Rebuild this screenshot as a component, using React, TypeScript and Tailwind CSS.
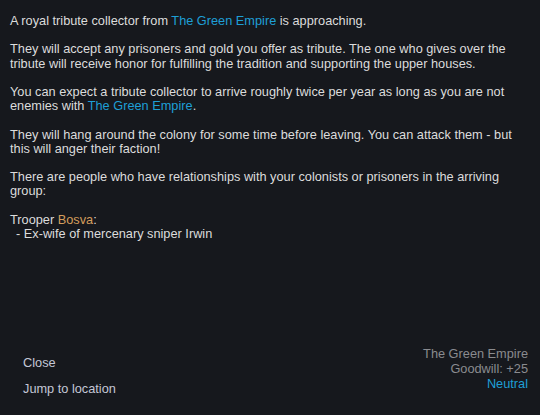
export default function App() {
  return (
    <div
      className="w-[540px] h-[415px] bg-[#16181d] flex flex-col text-[12.75px] leading-[14.2px] text-[#dcdcdc]"
      style={{ fontFamily: '"Liberation Sans", Arial, sans-serif' }}
    >
      {/* Letter body */}
      <div className="pl-[10px] pr-[28px] pt-[14px] flex flex-col gap-[14.2px]">
        <p>
          A royal tribute collector from{" "}
          <span className="text-[#1e9fd6]">The Green Empire</span> is approaching.
        </p>
        <p>
          They will accept any prisoners and gold you offer as tribute. The one who gives over the
          tribute will receive honor for fulfilling the tradition and supporting the upper houses.
        </p>
        <p>
          You can expect a tribute collector to arrive roughly twice per year as long as you are not
          enemies with <span className="text-[#1e9fd6]">The Green Empire</span>.
        </p>
        <p>
          They will hang around the colony for some time before leaving. You can attack them - but
          this will anger their faction!
        </p>
        <p>
          There are people who have relationships with your colonists or prisoners in the arriving
          group:
        </p>
        <div>
          <p>
            Trooper <span className="text-[#d49d5c]">Bosva</span>:
          </p>
          <p className="pl-[6px]">- Ex-wife of mercenary sniper Irwin</p>
        </div>
      </div>

      {/* Footer */}
      <div className="mt-auto flex justify-between items-end px-[12px] pb-[19px]">
        <div className="flex flex-col gap-[12px] pl-[11px] text-[#c4c7d6]">
          <button className="text-left">Close</button>
          <button className="text-left">Jump to location</button>
        </div>
        <div className="flex flex-col items-end text-[#8a8b8f] leading-[15px] mb-[5px]">
          <span>The Green Empire</span>
          <span>Goodwill: +25</span>
          <span className="text-[#1e9fd6]">Neutral</span>
        </div>
      </div>
    </div>
  );
}
